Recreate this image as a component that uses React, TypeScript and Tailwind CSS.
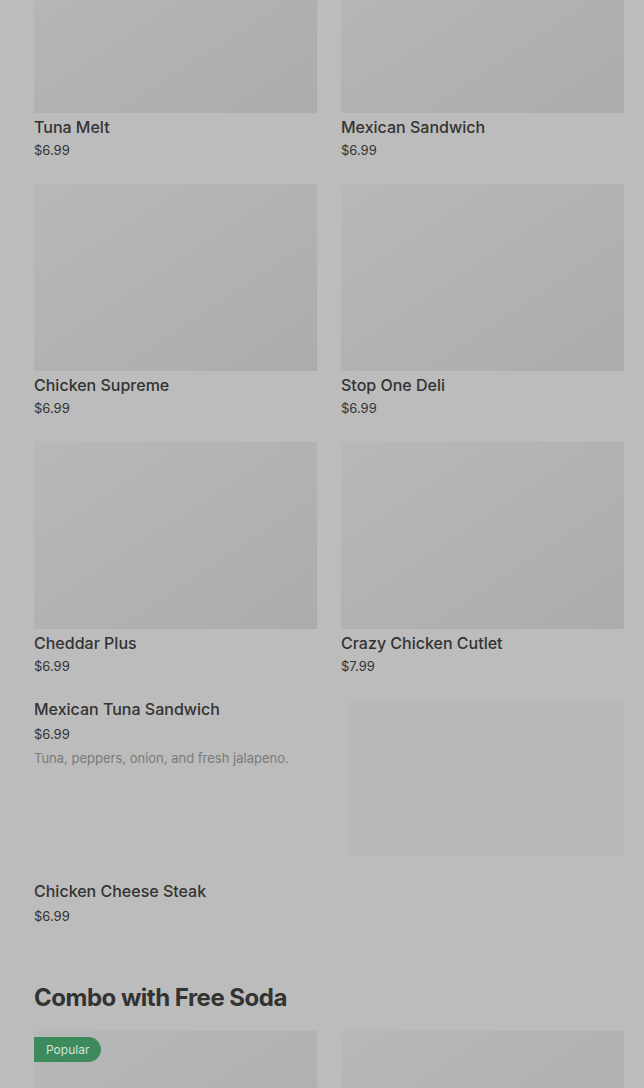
import React from 'react'

type Item = { name: string; price: string }

const gridItems: Item[] = [
  { name: 'Tuna Melt', price: '$6.99' },
  { name: 'Mexican Sandwich', price: '$6.99' },
  { name: 'Chicken Supreme', price: '$6.99' },
  { name: 'Stop One Deli', price: '$6.99' },
  { name: 'Cheddar Plus', price: '$6.99' },
  { name: 'Crazy Chicken Cutlet', price: '$7.99' },
]

function Placeholder({ className = '' }: { className?: string }) {
  return (
    <div
      className={`bg-linear-to-br from-[#b8b8b8] to-[#acacac] border-t border-[#bababa] ${className}`}
    />
  )
}

function GridCard({ item }: { item: Item }) {
  return (
    <div className="flex flex-col">
      <Placeholder className="h-[188px]" />
      <div className="mt-[4px] text-[16px] leading-5 font-medium text-[#333333]">{item.name}</div>
      <div className="mt-[4px] text-[13px] leading-[18px] text-[#333333]">{item.price}</div>
    </div>
  )
}

export default function App() {
  return (
    <div className="h-[1088px] overflow-hidden bg-[#bcbcbc] font-['Inter','Liberation_Sans',sans-serif]">
      <div className="-mt-[75px] pl-[34px] pr-[20px]">
        <div className="grid grid-cols-2 gap-x-6 gap-y-[24px]">
          {gridItems.map((item) => (
            <GridCard key={item.name} item={item} />
          ))}
        </div>

        <div className="mt-[24px] flex gap-6">
          <div className="flex-1">
            <div className="text-[16px] leading-5 font-medium text-[#333333]">Mexican Tuna Sandwich</div>
            <div className="mt-[6px] text-[13px] leading-[18px] text-[#333333]">$6.99</div>
            <div className="mt-[5px] text-[13px] leading-5 text-[#7a7a7a]">
              Tuna, peppers, onion, and fresh jalapeno.
            </div>
          </div>
          <Placeholder className="mt-[1px] w-[276px] h-[155px] from-[#b9b9b9] to-[#b8b8b8]" />
        </div>

        <div className="mt-[26px]">
          <div className="text-[16px] leading-5 font-medium text-[#333333]">Chicken Cheese Steak</div>
          <div className="mt-[6px] text-[13px] leading-[18px] text-[#333333]">$6.99</div>
        </div>

        <h2 className="mt-[57px] text-[24px] leading-8 font-bold tracking-[-0.5px] text-[#333333]">
          Combo with Free Soda
        </h2>

        <div className="mt-[16px] grid grid-cols-2 gap-x-6">
          <div className="relative">
            <Placeholder className="h-[188px]" />
            <span className="absolute left-0 top-[7px] h-[25px] px-3 flex items-center rounded-r-full bg-[#3d8a5d] text-[12px] text-[#d3e4d9]">
              Popular
            </span>
          </div>
          <Placeholder className="h-[188px]" />
        </div>
      </div>
    </div>
  )
}
